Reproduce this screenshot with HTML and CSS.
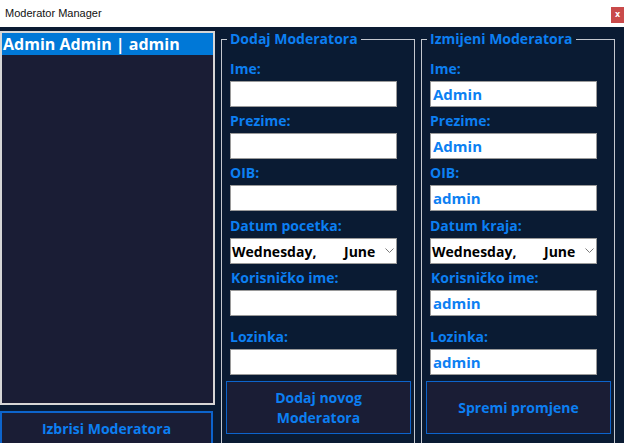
FILE: index.html
```html
<!DOCTYPE html>
<html lang="hr">
<head>
<meta charset="utf-8">
<title>Moderator Manager</title>
<link rel="stylesheet" href="styles.css">
</head>
<body>
<div class="window">
  <div class="titlebar">
    <span class="title">Moderator Manager</span>
    <span class="close">x</span>
  </div>
  <div class="main">
    <div class="left">
      <div class="list">
        <div class="item selected">Admin Admin | admin</div>
      </div>
      <button class="btn delete">Izbrisi Moderatora</button>
    </div>

    <fieldset class="group">
      <legend>Dodaj Moderatora</legend>
      <div class="field">
        <label>Ime:</label>
        <input class="box" type="text" value="">
      </div>
      <div class="field">
        <label>Prezime:</label>
        <input class="box" type="text" value="">
      </div>
      <div class="field">
        <label>OIB:</label>
        <input class="box" type="text" value="">
      </div>
      <div class="field f-date">
        <label>Datum pocetka:</label>
        <div class="box date"><span class="day">Wednesday,</span><span class="month">June</span><svg class="chev" width="9" height="6" viewBox="0 0 9 6"><path d="M0.5 0.5 L4.5 4.5 L8.5 0.5" fill="none" stroke="#7a7a7a" stroke-width="1"/></svg></div>
      </div>
      <div class="field">
        <label class="ind">Korisničko ime:</label>
        <input class="box" type="text" value="">
      </div>
      <div class="field f-pass">
        <label>Lozinka:</label>
        <input class="box" type="text" value="">
      </div>
      <button class="btn action">Dodaj novog<br>Moderatora</button>
    </fieldset>

    <fieldset class="group second">
      <legend>Izmijeni Moderatora</legend>
      <div class="field">
        <label>Ime:</label>
        <input class="box" type="text" value="Admin">
      </div>
      <div class="field">
        <label>Prezime:</label>
        <input class="box" type="text" value="Admin">
      </div>
      <div class="field">
        <label>OIB:</label>
        <input class="box" type="text" value="admin">
      </div>
      <div class="field f-date">
        <label>Datum kraja:</label>
        <div class="box date"><span class="day">Wednesday,</span><span class="month">June</span><svg class="chev" width="9" height="6" viewBox="0 0 9 6"><path d="M0.5 0.5 L4.5 4.5 L8.5 0.5" fill="none" stroke="#7a7a7a" stroke-width="1"/></svg></div>
      </div>
      <div class="field">
        <label class="ind">Korisničko ime:</label>
        <input class="box" type="text" value="admin">
      </div>
      <div class="field f-pass">
        <label>Lozinka:</label>
        <input class="box" type="text" value="admin">
      </div>
      <button class="btn action">Spremi promjene</button>
    </fieldset>
  </div>
</div>
</body>
</html>
```

FILE: styles.css
```css
* { box-sizing: border-box; }
html, body {
  margin: 0;
  padding: 0;
}
body {
  width: 624px;
  height: 443px;
  overflow: hidden;
  background: #0a1b33;
  font-family: "Open Sans", "Noto Sans", sans-serif;
}
.window {
  width: 624px;
  height: 443px;
  display: flex;
  flex-direction: column;
}
.titlebar {
  height: 27px;
  background: #ffffff;
  display: flex;
  align-items: flex-start;
  padding-left: 5px;
  flex: none;
}
.title {
  font-family: "Liberation Sans", Arial, sans-serif;
  font-size: 11px;
  color: #111;
  line-height: 27px;
}
.close {
  margin-left: auto;
  margin-top: 7px;
  width: 13px;
  height: 16px;
  background: #c94a4a;
  color: #fff;
  font-family: "DejaVu Sans", sans-serif;
  font-weight: bold;
  font-size: 8px;
  line-height: 15px;
  text-align: center;
}
.main {
  flex: 1;
  display: flex;
  align-items: flex-start;
  overflow: hidden;
}
.left {
  width: 215px;
  margin-top: 4px;
  display: flex;
  flex-direction: column;
  flex: none;
}
.list {
  height: 374px;
  border: 2px solid #d6d6d6;
  background: #1a1d35;
}
.item {
  height: 22px;
  font-size: 16px;
  font-weight: 700;
  line-height: 22px;
  color: #fff;
  padding-left: 1px;
  white-space: nowrap;
}
.item.selected { background: #0078d7; }
.btn {
  display: flex;
  align-items: center;
  justify-content: center;
  background: #1a1d35;
  border: 1px solid #0d64cc;
  color: #0c7ff2;
  font-family: "Open Sans", "Noto Sans", sans-serif;
  font-size: 14px;
  font-weight: 700;
  line-height: 20px;
  text-align: center;
  padding: 0;
  margin: 0;
}
.delete {
  margin-top: 6px;
  width: 213px;
  height: 44px;
  align-items: flex-start;
  padding-top: 6px;
  border-width: 2px;
}
.group {
  margin: 4px 0 0 6px;
  width: 194px;
  height: 440px;
  border: 1px solid #c4c8d0;
  padding: 0 3px 0 5px;
  flex: none;
}
.group.second {
  margin-left: 6px;
  width: 193px;
}
legend {
  padding: 0 3px;
  font-size: 14px;
  font-weight: 700;
  line-height: 16px;
  color: #0c7ff2;
  white-space: nowrap;
}
.field {
  display: flex;
  flex-direction: column;
  margin-left: 3px;
  margin-top: 5px;
}
.field:first-of-type { margin-top: 13px; }
.f-date { margin-top: 6px; }
.f-pass { margin-top: 12px; }
label {
  display: block;
  height: 18px;
  margin-bottom: 3px;
  font-size: 14px;
  font-weight: 700;
  line-height: 18px;
  color: #0c7ff2;
  white-space: nowrap;
}
label.ind { margin-left: 1px; }
.box {
  width: 167px;
  height: 26px;
  background: #fff;
  border: 1px solid #9a9a9a;
  margin: 0;
  padding: 0 2px;
  font-family: "Open Sans", "Noto Sans", sans-serif;
  font-size: 15px;
  font-weight: 700;
  color: #0c7ff2;
  outline: none;
  border-radius: 0;
}
.date {
  display: flex;
  align-items: center;
  padding: 0 0 0 1px;
  color: #000;
  font-size: 14px;
  white-space: nowrap;
}
.day { width: 112px; }
.month { width: 40px; }
.chev { margin-left: 1px; }
.action {
  margin-top: 6px;
  margin-left: -1px;
  width: 185px;
  height: 53px;
}
```
